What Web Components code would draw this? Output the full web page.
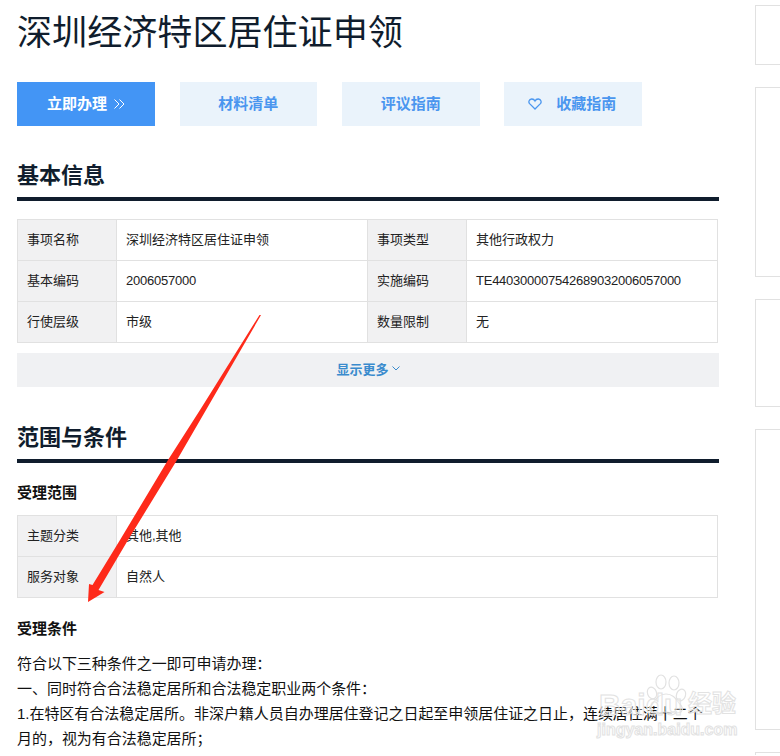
<!DOCTYPE html>
<html lang="zh-CN">
<head>
<meta charset="utf-8">
<title>深圳经济特区居住证申领</title>
<style>
html, body { margin: 0; height: 756px; overflow: hidden; background: #fff; }
body { font-family: "Liberation Sans", "Noto Sans CJK SC", sans-serif; color: #111; position: relative; }
</style>
</head>
<body>
<guide-page>
  <guide-title>深圳经济特区居住证申领</guide-title>
  <button-row>
    <guide-button primary>立即办理<svg slot="after" width="11" height="10" viewBox="0 0 11 10" fill="none" stroke="#fff" stroke-width="1"><path d="M.5.5 5 5 .5 9.5M5.5.5 10 5 5.5 9.5"/></svg></guide-button>
    <guide-button>材料清单</guide-button>
    <guide-button>评议指南</guide-button>
    <guide-button><svg slot="before" width="14" height="12" viewBox="0 0 14 12" fill="none" stroke="#4a96ef" stroke-width="1.3"><path d="M7 11 1.6 5.6C.3 4.2.8 1.2 3.6 1 5.2.9 6.4 1.8 7 3c.6-1.2 1.8-2.1 3.4-2 2.8.2 3.3 3.2 2 4.6z"/></svg>收藏指南</guide-button>
  </button-row>

  <section-head style="margin-top:32px">基本信息</section-head>
  <info-table style="margin-top:18px" columns="2">
    <info-cell label="事项名称">深圳经济特区居住证申领</info-cell>
    <info-cell label="事项类型">其他行政权力</info-cell>
    <info-cell label="基本编码" latin>2006057000</info-cell>
    <info-cell label="实施编码" latin>TE440300007542689032006057000</info-cell>
    <info-cell label="行使层级">市级</info-cell>
    <info-cell label="数量限制">无</info-cell>
  </info-table>
  <show-more>显示更多</show-more>

  <section-head style="margin-top:33px">范围与条件</section-head>
  <sub-head style="margin-top:20px">受理范围</sub-head>
  <info-table style="margin-top:12px" columns="1">
    <info-cell label="主题分类">其他,其他</info-cell>
    <info-cell label="服务对象">自然人</info-cell>
  </info-table>
  <sub-head style="margin-top:21px">受理条件</sub-head>
  <body-text style="margin-top:12px">
    <div>符合以下三种条件之一即可申请办理：</div>
    <div>一、同时符合合法稳定居所和合法稳定职业两个条件：</div>
    <div>1.在特区有合法稳定居所。非深户籍人员自办理居住登记之日起至申领居住证之日止，连续居住满十二个月的，视为有合法稳定居所；</div>
  </body-text>

  <side-card slot="side" style="height:60px"></side-card>
  <side-card slot="side" style="height:190px"></side-card>
  <side-card slot="side" style="height:108px"></side-card>
  <side-card slot="side" style="height:301px"></side-card>
  <side-card slot="side" style="height:3px;border-bottom:0"></side-card>
</guide-page>
<red-arrow></red-arrow>
<baidu-mark></baidu-mark>

<script>
class GuidePage extends HTMLElement {
  constructor() {
    super();
    this.attachShadow({ mode: 'open' });
    this.shadowRoot.innerHTML = `
      <style>
      :host { display: flex; align-items: flex-start; }
      main { width: 702px; margin-left: 17px; flex: none; }
      aside { margin-left: 36px; padding-top: 5px; flex: none; display: flex; flex-direction: column; gap: 22px; }
      </style>
      <main><slot></slot></main>
      <aside><slot name="side"></slot></aside>`;
  }
}
customElements.define('guide-page', GuidePage);

class GuideTitle extends HTMLElement {
  constructor() {
    super();
    this.attachShadow({ mode: 'open' });
    this.shadowRoot.innerHTML = `
      <style>
      :host { display: block; padding-top: 13px; font-size: 35.1px; line-height: 40px; color: #101d2d; white-space: nowrap; }
      </style>
      <slot></slot>`;
  }
}
customElements.define('guide-title', GuideTitle);

class ButtonRow extends HTMLElement {
  constructor() {
    super();
    this.attachShadow({ mode: 'open' });
    this.shadowRoot.innerHTML = `
      <style>
      :host { display: flex; gap: 24.8px; margin: 29px 0 0 .2px; }
      </style>
      <slot></slot>`;
  }
}
customElements.define('button-row', ButtonRow);

class GuideButton extends HTMLElement {
  constructor() {
    super();
    this.attachShadow({ mode: 'open' });
    this.shadowRoot.innerHTML = `
      <style>
      :host { display: flex; align-items: center; justify-content: center; box-sizing: border-box; width: 137.6px; height: 44px; padding-bottom: 4px; background: #eaf3fb; color: #4a96ef; font-size: 15px; font-weight: 700; }
      :host([primary]) { background: #4395f5; color: #fff; }
      ::slotted(svg[slot="before"]) { margin: 3px 14px 0 -2px; }
      ::slotted(svg[slot="after"]) { margin: 3px 0 0 7px; }
      </style>
      <slot name="before"></slot><slot></slot><slot name="after"></slot>`;
  }
}
customElements.define('guide-button', GuideButton);

class SectionHead extends HTMLElement {
  constructor() {
    super();
    this.attachShadow({ mode: 'open' });
    this.shadowRoot.innerHTML = `
      <style>
      :host { display: block; font-size: 22px; font-weight: 700; line-height: 36px; padding-bottom: 3px; border-bottom: 4px solid #101d2d; color: #101d2d; }
      </style>
      <slot></slot>`;
  }
}
customElements.define('section-head', SectionHead);

class SubHead extends HTMLElement {
  constructor() {
    super();
    this.attachShadow({ mode: 'open' });
    this.shadowRoot.innerHTML = `
      <style>
      :host { display: block; font-size: 15px; font-weight: 700; line-height: 20px; color: #111; }
      </style>
      <slot></slot>`;
  }
}
customElements.define('sub-head', SubHead);

class InfoTable extends HTMLElement {
  constructor() {
    super();
    this.attachShadow({ mode: 'open' });
    this.shadowRoot.innerHTML = `
      <style>
      :host { display: grid; grid-template-columns: 1fr; width: 701px; box-sizing: border-box; border-top: 1px solid #e1e1e1; border-left: 1px solid #e1e1e1; }
      :host([columns="2"]) { grid-template-columns: 350px 350px; }
      div { display: contents; }
      </style>
      <div><slot></slot></div>`;
  }
}
customElements.define('info-table', InfoTable);

class InfoCell extends HTMLElement {
  constructor() {
    super();
    this.attachShadow({ mode: 'open' });
    this.shadowRoot.innerHTML = `
      <style>
      :host { display: grid; grid-template-columns: 99px 1fr; height: 41px; box-sizing: border-box; border-bottom: 1px solid #e1e1e1; border-right: 1px solid #e1e1e1; font-size: 13px; color: #222; }
      span { display: flex; align-items: center; padding: 0 0 3px 9px; }
      :host([latin]) .value { letter-spacing: -.24px; padding-bottom: 1px; }
      .label { background: #f1f1f2; border-right: 1px solid #e1e1e1; }
      </style>
      <span class="label"></span><span class="value"><slot></slot></span>`;
    this.shadowRoot.querySelector('.label').textContent = this.getAttribute('label');
  }
}
customElements.define('info-cell', InfoCell);

class ShowMore extends HTMLElement {
  constructor() {
    super();
    this.attachShadow({ mode: 'open' });
    this.shadowRoot.innerHTML = `
      <style>
      :host { display: flex; align-items: center; justify-content: center; gap: 3px; box-sizing: border-box; height: 34px; margin-top: 10px; padding-bottom: 3px; background: #f0f1f3; color: #3a8bcd; font-size: 13px; font-weight: 700; }
      </style>
      <slot></slot>
      <svg width="8" height="5" viewBox="0 0 8 5" fill="none" stroke="#3a8bcd" stroke-width="1"><path d="M.5.5 4 4 7.5.5"/></svg>`;
  }
}
customElements.define('show-more', ShowMore);

class BodyText extends HTMLElement {
  constructor() {
    super();
    this.attachShadow({ mode: 'open' });
    this.shadowRoot.innerHTML = `
      <style>
      :host { display: block; max-width: 695px; font-size: 15px; line-height: 25px; letter-spacing: -.04px; color: #111; }
      </style>
      <slot></slot>`;
  }
}
customElements.define('body-text', BodyText);

class SideCard extends HTMLElement {
  constructor() {
    super();
    this.attachShadow({ mode: 'open' });
    this.shadowRoot.innerHTML = `
      <style>
      :host { display: block; width: 25px; box-sizing: border-box; border: 1px solid #e1e1e1; border-right: 0; }
      </style>`;
  }
}
customElements.define('side-card', SideCard);

// sits on top of the page, drawn by whoever took the screenshot
class RedArrow extends HTMLElement {
  constructor() {
    super();
    this.attachShadow({ mode: 'open' });
    this.shadowRoot.innerHTML = `
      <style>
      :host { position: absolute; left: 0; top: 0; width: 780px; height: 756px; pointer-events: none; }
      svg { display: block; }
      </style>
      <svg width="780" height="756" viewBox="0 0 780 756">
        <polygon fill="#fe2a1a" points="261,315 206,410 177,460 128,540 98.5,590 104.5,592 88,602 89,584 92.5,585 120,540 168,460 200,410 259.5,315"/>
      </svg>`;
  }
}
customElements.define('red-arrow', RedArrow);

class BaiduMark extends HTMLElement {
  constructor() {
    super();
    this.attachShadow({ mode: 'open' });
    this.shadowRoot.innerHTML = `
      <style>
      :host { position: absolute; left: 596px; top: 670px; width: 145px; height: 70px; pointer-events: none; font-family: "Liberation Sans", "Noto Sans CJK SC", sans-serif; font-weight: 700; color: rgba(255,255,255,.35); -webkit-text-stroke: 1px #e2e2e2; }
      svg { position: absolute; left: 0; top: 0; }
      .name, .cn, .url { position: absolute; white-space: nowrap; }
      .name { left: 3px; top: 18px; font-size: 30px; line-height: 34px; }
      .cn { left: 92px; top: 20px; font-size: 24px; line-height: 28px; }
      .url { left: 1px; top: 51px; font-size: 16px; line-height: 18px; }
      </style>
      <svg width="145" height="70" viewBox="0 0 145 70" fill="none" stroke="#e2e2e2" stroke-width="1.2">
        <ellipse cx="65" cy="12" rx="5" ry="7"/>
        <ellipse cx="78" cy="13" rx="5" ry="7"/>
        <ellipse cx="56" cy="23" rx="4.5" ry="6" transform="rotate(-20 56 23)"/>
        <ellipse cx="85" cy="25" rx="4.5" ry="6" transform="rotate(20 85 25)"/>
        <path d="M70 24c-7 0-10 5-13 9-3 3-5 6-2 9 3 2 9 0 15 0s12 2 15 0c3-3 1-6-2-9-3-4-6-9-13-9z"/>
      </svg>
      <span class="name">Baidu</span>
      <span class="cn">经验</span>
      <span class="url">jingyan.baidu.com</span>`;
  }
}
customElements.define('baidu-mark', BaiduMark);
</script>
</body>
</html>
